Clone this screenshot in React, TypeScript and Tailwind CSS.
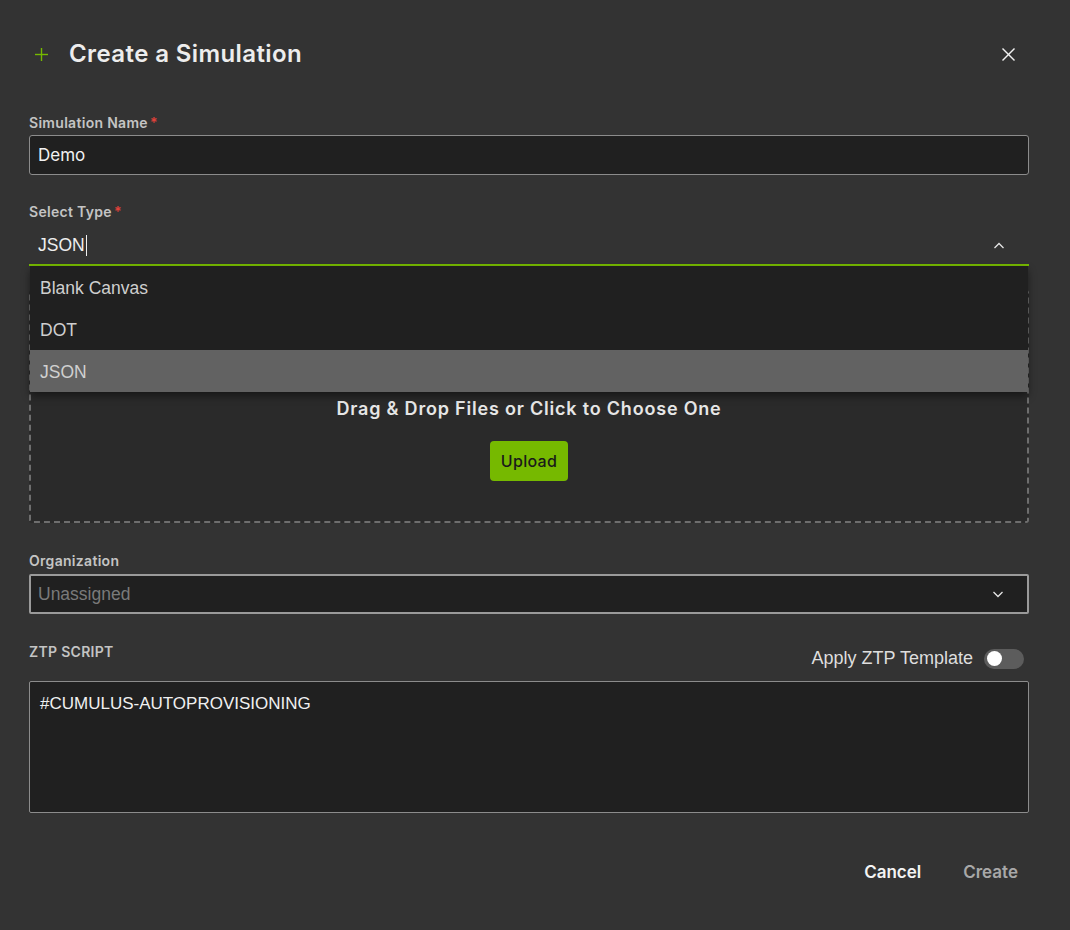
import { useState } from "react"

const ChevronUp = () => (
    <svg width="12" height="8" viewBox="0 0 12 8" fill="none">
        <polyline points="1.5,6 6,1.5 10.5,6" stroke="#e5e5e5" strokeWidth="1.3" />
    </svg>
)

const ChevronDown = () => (
    <svg width="12" height="8" viewBox="0 0 12 8" fill="none">
        <polyline points="1.5,2 6,6.5 10.5,2" stroke="#e5e5e5" strokeWidth="1.3" />
    </svg>
)

export default function App() {
    const [name, setName] = useState("Demo")
    const options = ["Blank Canvas", "DOT", "JSON"]
    const selected = "JSON"

    return (
        <div className="w-[1070px] h-[930px] bg-[#333333] overflow-hidden font-['Inter',sans-serif] text-[#e8e8e8]">
            {/* header */}
            <div className="h-[108px] flex items-center justify-between pl-[34px] pr-[54px]">
                <div className="flex items-center gap-[20px]">
                    <svg width="15" height="15" viewBox="0 0 15 15" fill="none">
                        <line x1="7.5" y1="1" x2="7.5" y2="14" stroke="#76b900" strokeWidth="1.4" />
                        <line x1="1" y1="7.5" x2="14" y2="7.5" stroke="#76b900" strokeWidth="1.4" />
                    </svg>
                    <h1 className="text-[24px] font-semibold text-[#ededed] tracking-[0.4px]">Create a Simulation</h1>
                </div>
                <svg width="15" height="15" viewBox="0 0 15 15" fill="none">
                    <line x1="1.5" y1="1.5" x2="13.5" y2="13.5" stroke="#f2f2f2" strokeWidth="1.4" />
                    <line x1="13.5" y1="1.5" x2="1.5" y2="13.5" stroke="#f2f2f2" strokeWidth="1.4" />
                </svg>
            </div>

            <div className="px-[29px] pr-[41px] mt-[6px]">
                {/* simulation name */}
                <label className="block h-[18px] leading-[18px] text-[14px] font-semibold text-[#c4c4c4] tracking-[0.3px]">
                    Simulation Name<span className="text-[#e0413a] ml-[2px]">*</span>
                </label>
                <input
                    className="mt-[3px] w-full h-[40px] bg-[#202020] border border-[#8c8c8c] rounded-[3px] px-[8px] text-[17px] text-[#f2f2f2] font-['Inter',sans-serif] focus:outline-none"
                    value={name}
                    onChange={(e) => setName(e.target.value)}
                />

                {/* select type */}
                <label className="block mt-[28px] h-[18px] leading-[18px] text-[14px] font-semibold text-[#c4c4c4] tracking-[0.3px]">
                    Select Type<span className="text-[#e0413a] ml-[2px]">*</span>
                </label>
                <div className="relative mt-[4px]">
                    <div className="h-[41px] border-b-2 border-[#76b900] flex items-center justify-between pl-[9px] pr-[24px] pt-[2px]">
                        <div className="flex items-center font-['Liberation_Sans',sans-serif] text-[17.5px] text-[#eeeeee]">
                            {selected}
                            <span className="inline-block w-px h-[21px] bg-[#f0f0f0] ml-[1px]" />
                        </div>
                        <ChevronUp />
                    </div>
                    <ul className="absolute z-10 left-[1px] right-[1px] top-[41px] bg-[#202020] shadow-[0_4px_8px_rgba(0,0,0,0.45)] font-['Liberation_Sans',sans-serif] text-[17.5px] text-[#cfcfcf]">
                        {options.map((o) => (
                            <li
                                key={o}
                                className={
                                    o === selected
                                        ? "h-[42px] flex items-center pl-[10px] pt-[2px] bg-[#626262] text-[#d0d0d0]"
                                        : "h-[42px] flex items-center pl-[10px] pt-[2px]"
                                }
                            >
                                {o}
                            </li>
                        ))}
                    </ul>
                </div>

                {/* dropzone */}
                <div className="mt-[24px] h-[233px] border-2 border-dashed border-[#6e6e6e] bg-[#2a2a2a] rounded-[3px] flex flex-col items-center justify-end pb-[40px]">
                    <p className="text-[18px] font-semibold text-[#e6e6e6] leading-[24px] tracking-[0.8px]">Drag &amp; Drop Files or Click to Choose One</p>
                    <button className="mt-[20px] h-[40px] px-[11px] rounded-[4px] bg-[#76b900] text-[#1a1a1a] text-[16px] font-medium tracking-[0.3px]">
                        Upload
                    </button>
                </div>

                {/* organization */}
                <label className="block mt-[29px] h-[18px] leading-[18px] text-[14px] font-semibold text-[#c4c4c4] tracking-[0.3px]">
                    Organization
                </label>
                <div className="mt-[4px] h-[40px] bg-[#202020] border-2 border-[#9a9a9a] rounded-[2px] flex items-center justify-between pl-[7px] pr-[23px]">
                    <span className="font-['Liberation_Sans',sans-serif] text-[17.5px] text-[#7a7a7a]">Unassigned</span>
                    <ChevronDown />
                </div>

                {/* ztp */}
                <div className="mt-[28px] flex justify-between">
                    <span className="h-[20px] leading-[20px] text-[14px] font-semibold text-[#c4c4c4] tracking-[0.3px]">ZTP SCRIPT</span>
                    <div className="flex items-center gap-[11px] mt-[3px] pr-[5px]">
                        <span className="font-['Liberation_Sans',sans-serif] text-[18px] text-[#dedede]">Apply ZTP Template</span>
                        <div className="w-[40px] h-[20px] rounded-full bg-[#5c5c5c] flex items-center px-[3px]">
                            <div className="w-[15px] h-[15px] rounded-full bg-white" />
                        </div>
                    </div>
                </div>
                <div className="mt-[9px] h-[132px] bg-[#202020] border border-[#8c8c8c] rounded-[2px] px-[10px] pt-[9px] font-['Liberation_Sans',sans-serif] text-[17px] text-[#f0f0f0]">
                    #CUMULUS-AUTOPROVISIONING
                </div>

                {/* footer */}
                <div className="mt-[47px] flex justify-end gap-[26px] pr-[3px]">
                    <button className="px-[8px] h-[24px] text-[17px] font-semibold text-[#f4f4f4]">Cancel</button>
                    <button className="px-[8px] h-[24px] text-[17px] font-semibold text-[#a8a8a8]">Create</button>
                </div>
            </div>
        </div>
    )
}
